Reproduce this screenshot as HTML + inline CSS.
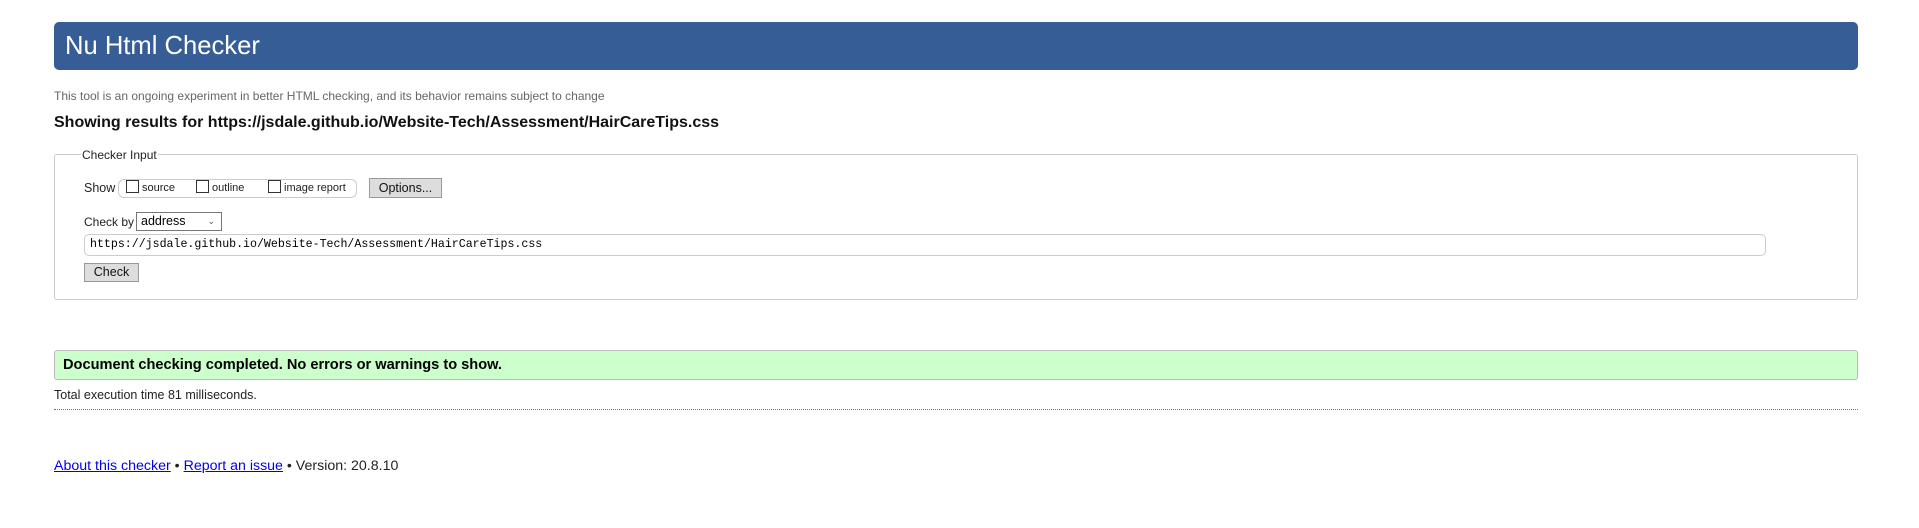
<!DOCTYPE html>
<html><head><meta charset="utf-8"><style>
body{margin:0;width:1919px;height:528px;background:#fff;font-family:"Liberation Sans",Arial,sans-serif;position:relative;overflow:hidden}
.a{position:absolute;white-space:nowrap}
#hd{left:54px;top:22px;width:1804px;height:48px;background:#365d95;border-radius:5px}
#hd span{position:absolute;left:11px;top:10px;color:#fff;font-size:25.6px}
#sub{left:54px;top:89px;font-size:12px;color:#666}
#sr{left:54px;top:114px;font-size:16px;font-weight:bold;color:#111}
#fs{left:54px;top:154px;width:1802px;height:144px;border:1px solid #ccc;border-radius:3px}
#lg{left:81px;top:148px;font-size:12px;background:#fff;padding:0 1px;color:#222}
.t{font-size:12px;color:#222}
#grp{left:118px;top:179px;width:237px;height:17px;border:1px solid #ccc;border-radius:6px}
.cb{position:absolute;width:11px;height:11px;border:1px solid #333;background:#fff}
.btn{position:absolute;background:#ddd;border:1px solid #999;font-size:12px;text-align:center;box-sizing:border-box;color:#111}
#sel{left:136px;top:212px;width:86px;height:19px;border:1px solid #777;box-sizing:border-box;font-size:12.5px;padding-left:4px;line-height:17px;background:#fff}
#url{left:84px;top:234px;width:1682px;height:22px;border:1px solid #ccc;border-radius:5px;box-sizing:border-box;font-family:"Liberation Mono",monospace;font-size:11.6px;line-height:20px;padding-left:5px}
#ok{left:54px;top:350px;width:1804px;height:30px;background:#ccffcc;border:1px solid #bbb;border-radius:3px;box-sizing:border-box;font-weight:bold;font-size:14.6px;line-height:28px;padding-left:8px}
#tt{left:54px;top:388px;font-size:12.5px;color:#222}
#dl{left:54px;top:409px;width:1804px;border-top:1px dotted #777}
#ft{left:54px;top:458px;font-size:14.2px;color:#222}
#ft a{color:#00e;text-decoration:underline}
</style></head><body>
<div class="a" id="hd"><span>Nu Html Checker</span></div>
<div class="a" id="sub">This tool is an ongoing experiment in better HTML checking, and its behavior remains subject to change</div>
<div class="a" id="sr">Showing results for https://jsdale.github.io/Website-Tech/Assessment/HairCareTips.css</div>
<div class="a" id="fs"></div>
<div class="a" id="lg">Checker Input</div>
<div class="a t" style="left:84px;top:181px;font-size:12.5px">Show</div>
<div class="a" id="grp"></div>
<div class="cb" style="left:126px;top:180px"></div><div class="a t" style="left:142px;top:182px;font-size:11px">source</div>
<div class="cb" style="left:196px;top:180px"></div><div class="a t" style="left:212px;top:182px;font-size:11px">outline</div>
<div class="cb" style="left:268px;top:180px"></div><div class="a t" style="left:284px;top:182px;font-size:11px">image report</div>
<div class="btn" style="left:369px;top:178px;width:73px;height:20px;line-height:18px;font-size:12.5px">Options...</div>
<div class="a t" style="left:84px;top:215px;font-size:12px">Check by</div>
<div class="a" id="sel">address<span style="position:absolute;right:6px;top:0;font-size:9px;color:#555">&#8964;</span></div>
<div class="a" id="url">https://jsdale.github.io/Website-Tech/Assessment/HairCareTips.css</div>
<div class="btn" style="left:84px;top:263px;width:55px;height:19px;line-height:17px;font-size:12.5px">Check</div>
<div class="a" id="ok">Document checking completed. No errors or warnings to show.</div>
<div class="a" id="tt">Total execution time 81 milliseconds.</div>
<div class="a" id="dl"></div>
<div class="a" id="ft"><a>About this checker</a> • <a>Report an issue</a> • Version: 20.8.10</div>
</body></html>
